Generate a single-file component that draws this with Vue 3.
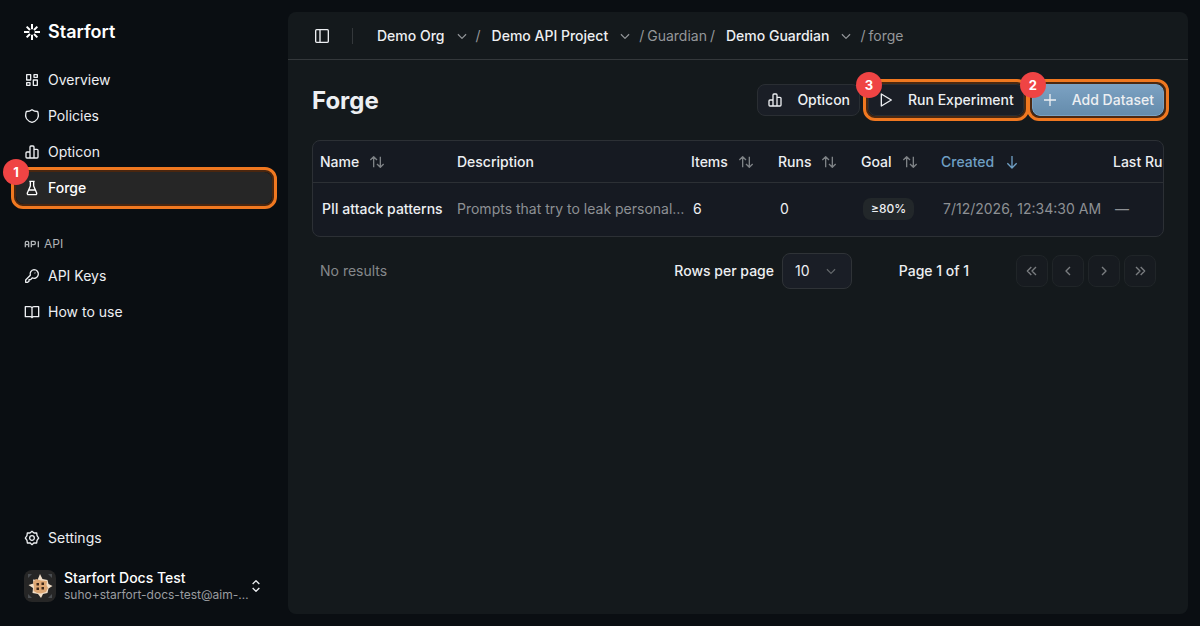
<script setup>
import { ref } from 'vue'

const icons = {
  logo: 'M12 0v8M12 16v8M0 12h8M16 12h8M4 4l5 5M15 15l5 5M20 4l-5 5M9 15l-5 5',
  overview: 'M4 4h6v8H4zM15 4h5v4h-5zM14 12h6v8h-6zM4 16h5v4H4z',
  shield: 'M12 2.500c2.400 1.800 5 2.600 8.500 2.700 1.600 4.300 1.200 8.300-.7 11.300-1.700 2.500-4.400 4.200-7.800 5-3.400-.8-6.100-2.500-7.800-5-1.900-3-2.300-7-.7-11.300 3.500-.1 6.100-.9 8.500-2.700z',
  chart: 'M9 21V4.500A1.500 1.500 0 0 1 10.500 3h3A1.500 1.500 0 0 1 15 4.500V21M9 12H4.500A1.500 1.500 0 0 0 3 13.500v6A1.500 1.500 0 0 0 4.500 21h15a1.500 1.500 0 0 0 1.500-1.500v-10A1.500 1.500 0 0 0 19.500 8H15',
  flask: 'M8 2h8M9.500 2v7L5 19.500c-.4 1.200.3 2.500 1.600 2.500h10.800c1.300 0 2-1.300 1.600-2.500L14.500 9V2M7.500 15h9',
  api: 'M2 17v-7a2 2 0 0 1 2-2h1a2 2 0 0 1 2 2v7M2 13h5M11 17V8h4a2 2 0 0 1 2 2v1a2 2 0 0 1-2 2h-4M21.500 8v9',
  key: 'M15 2.500a6.500 6.500 0 1 1-2.700 12.400L10 17.500H7.500V20l-2 1.500H2.500v-3.500l7-7A6.500 6.500 0 0 1 15 2.500zM16 7.500h.5v.5',
  book: 'M12 6v14M12 6a3 3 0 0 0-3-2H2v15h7a3 3 0 0 1 3 1.500A3 3 0 0 1 15 19h7V4h-7a3 3 0 0 0-3 2z',
  settings: 'M12 2l3 2.500 4-.2.500 4L22 12l-2.500 3.500-.5 4-4-.2L12 22l-3-2.700-4 .2-.5-4L2 12l2.500-3.700.5-4 4 .2zM12 8.500a3.500 3.500 0 1 1 0 7 3.500 3.500 0 0 1 0-7z',
  panel: 'M4 2.500h16A1.500 1.500 0 0 1 21.500 4v16a1.500 1.500 0 0 1-1.500 1.500H4A1.500 1.500 0 0 1 2.500 20V4A1.500 1.500 0 0 1 4 2.500zM9 2.500v19',
  down: 'M5 9l7 7 7-7',
  updown: 'M7 9l5-5 5 5M7 15l5 5 5-5',
  play: 'M5 3l15 9-15 9z',
  plus: 'M12 3v18M3 12h18',
  sort: 'M7 20V4M2 9l5-5 5 5M17 4v16M12 15l5 5 5-5',
  arrow: 'M12 3v18M5 14l7 7 7-7',
  first: 'M11 6l-6 6 6 6M18 6l-6 6 6 6',
  prev: 'M15 6l-6 6 6 6',
  next: 'M9 6l6 6-6 6',
  last: 'M6 6l6 6-6 6M13 6l6 6-6 6',
}

const mainNav = [
  { label: 'Overview', icon: 'overview' },
  { label: 'Policies', icon: 'shield' },
  { label: 'Opticon', icon: 'chart' },
  { label: 'Forge', icon: 'flask', active: true, step: 1 },
]
const apiNav = [
  { label: 'API Keys', icon: 'key' },
  { label: 'How to use', icon: 'book' },
]
const columns = [
  { label: 'Name', key: 'name', sort: true },
  { label: 'Description', key: 'description' },
  { label: 'Items', key: 'items', sort: true },
  { label: 'Runs', key: 'runs', sort: true },
  { label: 'Goal', key: 'goal', sort: true },
  { label: 'Created', key: 'created', sort: true, sorted: true },
  { label: 'Last Run', key: 'last' },
]
const pager = [
  { icon: 'first', label: 'First page' },
  { icon: 'prev', label: 'Previous page' },
  { icon: 'next', label: 'Next page' },
  { icon: 'last', label: 'Last page' },
]
const pageSize = ref('10')
</script>

<template>
  <div class="app">
    <aside class="sidebar">
      <a class="brand" href="#">
        <svg class="icon logo" viewBox="0 0 24 24"><path :d="icons.logo" /></svg>
        Starfort
      </a>
      <nav class="nav">
        <a v-for="n in mainNav" :key="n.label" href="#" class="item" :class="{ active: n.active, marked: n.step }">
          <svg class="icon" viewBox="0 0 24 24"><path :d="icons[n.icon]" /></svg>
          {{ n.label }}
          <span v-if="n.step" class="step">{{ n.step }}</span>
        </a>
      </nav>
      <div class="group">
        <svg class="icon" viewBox="0 0 24 24"><path :d="icons.api" /></svg>
        API
      </div>
      <nav class="nav">
        <a v-for="n in apiNav" :key="n.label" href="#" class="item">
          <svg class="icon" viewBox="0 0 24 24"><path :d="icons[n.icon]" /></svg>
          {{ n.label }}
        </a>
      </nav>
      <div class="foot">
        <a href="#" class="item">
          <svg class="icon" viewBox="0 0 24 24"><path :d="icons.settings" /></svg>
          Settings
        </a>
        <button class="user" type="button">
          <svg class="avatar" viewBox="0 0 32 32">
            <rect width="32" height="32" rx="8" fill="#262626" />
            <path d="M4 4h4l-4 4zM28 4v4l-4-4zM4 28v-4l4 4zM28 28h-4l4-4z" fill="#4a4e52" />
            <path d="M16 4l2.500 5 5 1 1 4 4 2-4 2.500-1 4.500-4.500 1-2 4-3-4-5.500-1 .5-5L4.500 15l5-1.500-.5-4 4.500.5z" fill="#f2dfc8" />
            <path d="M12 9l5 1.500 6 .5-.5 4 1.500 3-2 4-5 1.500-4-.5-3.500-2L10 17l-1-5z" fill="#dda774" />
            <path d="M12.500 13h2.500v2.500h-2.500zM17.500 12.500H20V15h-2.500zM12.500 17.500H15V20h-2.500zM17.500 17H20v2.500h-2.500z" fill="#3d2718" />
          </svg>
          <span class="who">
            <span class="uname">Starfort Docs Test</span>
            <span class="mail">suho+starfort-docs-test@aim-…</span>
          </span>
          <svg class="icon" viewBox="0 0 24 24"><path :d="icons.updown" /></svg>
        </button>
      </div>
    </aside>

    <main class="main">
      <header class="top">
        <button class="plain" type="button" aria-label="Toggle sidebar">
          <svg class="icon" viewBox="0 0 24 24"><path :d="icons.panel" /></svg>
        </button>
        <span class="divider"></span>
        <nav class="crumbs">
          <button class="crumb" type="button">Demo Org<svg class="icon small" viewBox="0 0 24 24"><path :d="icons.down" /></svg></button>
          <span>/</span>
          <button class="crumb" type="button">Demo API Project<svg class="icon small" viewBox="0 0 24 24"><path :d="icons.down" /></svg></button>
          <span>/</span>
          <a href="#">Guardian</a>
          <span>/</span>
          <button class="crumb" type="button">Demo Guardian<svg class="icon small" viewBox="0 0 24 24"><path :d="icons.down" /></svg></button>
          <span>/</span>
          <a href="#">forge</a>
        </nav>
      </header>

      <section class="content">
        <div class="heading">
          <h1>Forge</h1>
          <div class="actions">
            <button class="btn" type="button">
              <svg class="icon" viewBox="0 0 24 24"><path :d="icons.chart" /></svg>Opticon
            </button>
            <button class="btn marked" type="button">
              <svg class="icon" viewBox="0 0 24 24"><path :d="icons.play" /></svg>Run Experiment
              <span class="step">3</span>
            </button>
            <button class="btn primary marked" type="button">
              <svg class="icon" viewBox="0 0 24 24"><path :d="icons.plus" /></svg>Add Dataset
              <span class="step">2</span>
            </button>
          </div>
        </div>

        <div class="tablebox">
          <table>
            <colgroup><col v-for="c in columns" :key="c.key" :class="'c-' + c.key" /></colgroup>
            <thead>
              <tr>
                <th v-for="c in columns" :key="c.key" scope="col">
                  <button v-if="c.sort" type="button" class="sort" :class="{ sorted: c.sorted }">
                    {{ c.label }}
                    <svg class="icon" viewBox="0 0 24 24"><path :d="c.sorted ? icons.arrow : icons.sort" /></svg>
                  </button>
                  <template v-else>{{ c.label }}</template>
                </th>
              </tr>
            </thead>
            <tbody>
              <tr>
                <td class="in strong">PII attack patterns</td>
                <td class="dim desc">Prompts that try to leak personal…</td>
                <td class="in">6</td>
                <td class="in">0</td>
                <td class="in"><span class="pill">≥80%</span></td>
                <td class="in dim">7/12/2026, 12:34:30 AM</td>
                <td class="in dim">—</td>
              </tr>
            </tbody>
          </table>
        </div>

        <div class="pagination">
          <span class="count">No results</span>
          <label for="page-size">Rows per page</label>
          <span class="selectbox">
            <select id="page-size" v-model="pageSize">
              <option>10</option>
              <option>20</option>
              <option>50</option>
            </select>
            <svg class="icon small" viewBox="0 0 24 24"><path :d="icons.down" /></svg>
          </span>
          <span class="page">Page 1 of 1</span>
          <div class="pager">
            <button v-for="p in pager" :key="p.icon" type="button" disabled :aria-label="p.label">
              <svg class="icon" viewBox="0 0 24 24"><path :d="icons[p.icon]" /></svg>
            </button>
          </div>
        </div>
      </section>
    </main>
  </div>
</template>

<style>
body {
  margin: 0;
  background: #0a0e12;
}
</style>

<style scoped>
.app {
  display: flex;
  min-height: 100vh;
  box-sizing: border-box;
  background: #0a0e12;
  color: #edeff2;
  font: 14px/20px Inter, "Liberation Sans", sans-serif;
}
.app *,
.app *::after {
  box-sizing: border-box;
}
button {
  font: inherit;
  color: inherit;
  background: none;
  border: 0;
  padding: 0;
}
a {
  color: inherit;
  text-decoration: none;
}
.icon {
  width: 16px;
  height: 16px;
  flex: none;
  fill: none;
  stroke: currentColor;
  stroke-width: 2;
  stroke-linejoin: round;
}
.sidebar {
  display: flex;
  flex-direction: column;
  flex: none;
  width: 288px;
  padding: 16px;
}
.brand {
  display: flex;
  align-items: center;
  gap: 8px;
  height: 32px;
  padding: 0 8px;
  margin-bottom: 16px;
  font-size: 18px;
  font-weight: 600;
  color: #fff;
}
.logo {
  stroke-width: 3;
}
.nav {
  display: flex;
  flex-direction: column;
  gap: 4px;
}
.item {
  position: relative;
  display: flex;
  align-items: center;
  gap: 8px;
  width: 256px;
  height: 32px;
  padding: 0 8px;
  border-radius: 8px;
}
.active {
  background: #262626;
  font-weight: 500;
  color: #fff;
}
.group {
  display: flex;
  align-items: center;
  gap: 4px;
  height: 32px;
  margin-top: 24px;
  padding: 0 8px;
  font-size: 12px;
  color: #b0b3b6;
}
.foot {
  display: flex;
  flex-direction: column;
  gap: 8px;
  margin-top: auto;
}
.user {
  display: flex;
  align-items: center;
  gap: 8px;
  width: 256px;
  height: 48px;
  padding: 0 8px;
  text-align: left;
}
.avatar {
  width: 32px;
  height: 32px;
  flex: none;
}
.who {
  display: flex;
  flex-direction: column;
  flex: 1;
  min-width: 0;
}
.uname {
  line-height: 18px;
  font-weight: 500;
  color: #fff;
}
.mail {
  white-space: nowrap;
  font-size: 12px;
  line-height: 16px;
  color: #9a9da0;
}
.main {
  display: flex;
  flex-direction: column;
  flex: 1;
  min-width: 0;
  margin: 12px 12px 12px 0;
  border-radius: 8px;
  background: #14191c;
}
.top {
  display: flex;
  align-items: center;
  height: 48px;
  padding: 0 24px;
  border-bottom: 1px solid #34383b;
}
.plain {
  display: flex;
  padding: 2px;
}
.divider {
  width: 1px;
  height: 16px;
  margin: 0 24px 0 20px;
  background: #34383b;
}
.crumbs {
  display: flex;
  align-items: center;
  gap: 3px;
  color: #94979a;
}
.crumb {
  display: flex;
  align-items: center;
  gap: 10px;
  padding: 0 4px 0 8px;
  font-weight: 500;
  color: #edeff2;
}
.crumbs > .crumb:first-child {
  padding-left: 0;
}
.small {
  width: 14px;
  height: 14px;
  color: #94979a;
}
.content {
  padding: 24px;
}
.heading {
  display: flex;
  align-items: center;
  justify-content: space-between;
  height: 32px;
  margin-bottom: 24px;
}
h1 {
  margin: 0;
  padding-top: 2px;
  font-size: 24px;
  line-height: 32px;
  font-weight: 700;
}
.actions {
  display: flex;
  gap: 8px;
}
.btn {
  position: relative;
  display: flex;
  align-items: center;
  gap: 14px;
  height: 32px;
  padding: 0 9px;
  border: 1px solid #2a2e33;
  border-radius: 8px;
  background: #1a1e26;
  font-weight: 500;
  white-space: nowrap;
}
.primary {
  border-color: #7ba3c4;
  background: linear-gradient(#7ba1c2, #658cac);
}
.marked::after {
  content: "";
  position: absolute;
  inset: -5px;
  border: 3px solid #f07820;
  border-radius: 12px;
  box-shadow: inset 0 0 0 2px rgba(90, 45, 15, 0.8);
  pointer-events: none;
}
.btn.marked::after {
  inset: -6px;
}
.step {
  position: absolute;
  z-index: 2;
  top: -13px;
  left: -13px;
  width: 26px;
  height: 26px;
  border-radius: 50%;
  background: #ef4444;
  color: #fff;
  font-size: 13px;
  line-height: 26px;
  font-weight: 700;
  text-align: center;
}
.tablebox {
  overflow: hidden;
  border: 1px solid #2c3035;
  border-radius: 8px;
  background: #161a22;
}
table {
  table-layout: fixed;
  width: 100%;
  min-width: 920px;
  border-collapse: collapse;
}
.c-name { width: 136px; }
.c-description { width: 234px; }
.c-items { width: 87px; }
.c-runs { width: 83px; }
.c-goal { width: 80px; }
.c-created { width: 172px; }
.c-last { width: 128px; }
th {
  height: 41px;
  padding: 2px 8px 0;
  border-bottom: 1px solid #2c3035;
  font-weight: 500;
  text-align: left;
  white-space: nowrap;
}
th:first-child,
td:first-child {
  padding-left: 7px;
}
.sort {
  display: flex;
  align-items: center;
  gap: 10px;
}
.sort .icon {
  color: #7e8286;
}
.sorted,
.sorted .icon {
  color: #6f9fc4;
}
td {
  height: 54px;
  padding: 0 8px;
  white-space: nowrap;
}
td.in {
  padding: 0 0 0 10px;
}
td.in:first-child {
  padding-left: 9px;
}
.strong {
  font-weight: 500;
}
.dim {
  color: #8d9094;
}
td.desc {
  padding-right: 0;
}
.pill {
  display: inline-block;
  padding: 0 8px;
  border-radius: 8px;
  background: #22272a;
  font-size: 12px;
  line-height: 22px;
  font-weight: 500;
}
.pagination {
  display: flex;
  align-items: center;
  margin-top: 16px;
  padding: 0 8px;
  font-weight: 500;
}
.count {
  flex: 1;
  font-weight: 400;
  color: #85888b;
}
.selectbox {
  position: relative;
  width: 70px;
  margin-left: 8px;
}
select {
  display: block;
  width: 100%;
  height: 36px;
  padding: 0 12px;
  border: 1px solid #2f3337;
  border-radius: 8px;
  appearance: none;
  background: #1a1e26;
  color: inherit;
  font: inherit;
  font-weight: 400;
}
.selectbox .icon {
  position: absolute;
  top: 11px;
  right: 14px;
  color: #65696c;
  pointer-events: none;
}
.page {
  width: 164px;
  text-align: center;
}
.pager {
  display: flex;
  gap: 4px;
}
.pager button {
  display: flex;
  align-items: center;
  justify-content: center;
  width: 32px;
  height: 32px;
  border: 1px solid #202528;
  border-radius: 8px;
  background: #171b20;
  color: #7a7d80;
}
</style>
